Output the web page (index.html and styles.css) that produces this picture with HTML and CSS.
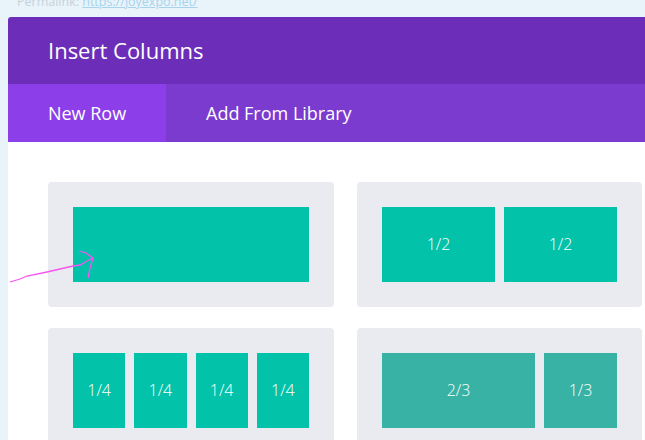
FILE: index.html
```html
<!DOCTYPE html>
<html lang="en">
<head>
	<meta charset="UTF-8">
	<title>Insert Columns</title>
	<link rel="stylesheet" href="styles.css">
</head>
<body>
	<div class="permalink">Permalink: <a href="#">https://joyexpo.net/</a></div>
	<div class="modal">
		<div class="modal-head">Insert Columns</div>
		<div class="tabs">
			<div class="tab active">New Row</div>
			<div class="tab">Add From Library</div>
		</div>
		<div class="modal-body">
			<div class="layouts">
				<div class="layout">
					<div class="col"></div>
				</div>
				<div class="layout">
					<div class="col">1/2</div>
					<div class="col">1/2</div>
				</div>
				<div class="layout">
					<div class="col">1/4</div>
					<div class="col">1/4</div>
					<div class="col">1/4</div>
					<div class="col">1/4</div>
				</div>
				<div class="layout">
					<div class="col dark two-third">2/3</div>
					<div class="col dark">1/3</div>
				</div>
			</div>
		</div>
	</div>
	<!-- 手画的箭头标注 -->
	<svg class="arrow" width="110" height="50" viewBox="0 0 110 50">
		<path d="M10 42 L20 39 L27 36 L47 32 L73 26 L80 25 L87 21 L93 18" fill="none" stroke="#f754f0" stroke-width="1.3"/>
		<path d="M79 11 L86 13 L93 18 L90 28 L88 38" fill="none" stroke="#f754f0" stroke-width="1.3"/>
	</svg>
</body>
</html>
```

FILE: styles.css
```css
*{
	margin: 0;
	padding: 0;
	box-sizing: border-box;
}
body{
	background: #e8f4fa;
	font-family: "Open Sans", "Liberation Sans", sans-serif;
	overflow: hidden;
	height: 440px;
}
.permalink{
	height: 17px;
	padding-left: 17px;
	font-size: 12.5px;
	line-height: 4px;
	color: #c5d2d9;
	overflow: hidden;
	white-space: nowrap;
}
.permalink a{
	color: #a9d3ec;
}
.modal{
	margin-left: 8px;
	width: 680px;
	height: 430px;
	background: #fff;
	border-radius: 3px 3px 0 0;
	overflow: hidden;
}
.modal-head{
	height: 67px;
	line-height: 67px;
	padding-left: 40px;
	background: #6c2eb9;
	color: #fff;
	font-size: 22px;
}
.tabs{
	display: flex;
	height: 58px;
	background: #7b3bcf;
}
.tab{
	padding: 0 40px;
	line-height: 58px;
	font-size: 18px;
	color: #fff;
}
.tab.active{
	width: 158px;
	padding: 0;
	text-align: center;
	background: #8c3fe8;
}
.modal-body{
	padding: 40px 0 0 40px;
}
.layouts{
	display: grid;
	grid-template-columns: 286px 285px;
	column-gap: 23px;
	row-gap: 21px;
}
.layout{
	display: flex;
	gap: 9px;
	padding: 25px;
	background: #e9ebf0;
	border-radius: 4px;
}
.col{
	flex: 1;
	height: 75px;
	line-height: 75px;
	text-align: center;
	background: #02c2a9;
	color: #fff;
	font-size: 16px;
	font-weight: 300;
}
.col.dark{
	background: #38b2a4;
}
.col.two-third{
	flex: 0 0 153px;
}
.arrow{
	position: absolute;
	left: 0;
	top: 240px;
}
```
